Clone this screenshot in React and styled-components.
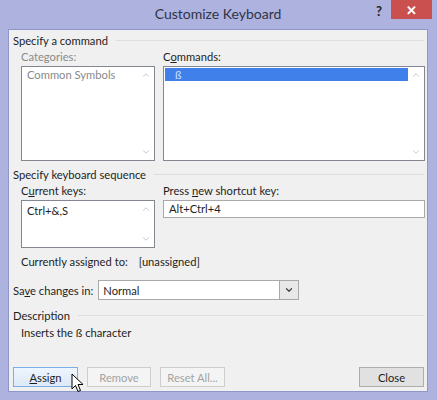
import React from 'react';
import styled, { createGlobalStyle } from 'styled-components';
import { ChevronUp, ChevronDown } from 'lucide-react';

const GlobalStyle = createGlobalStyle`
  html, body {
    margin: 0;
    padding: 0;
    background: #ffffff;
  }
  body {
    font-family: Lato, "Noto Sans", sans-serif;
    font-size: 11.2px;
    color: #1e1e1e;
  }
`;

const Window = styled.div`
  position: relative;
  width: 437px;
  height: 400px;
  box-sizing: border-box;
  background: #adb2df;
  display: flex;
  flex-direction: column;
  padding: 0 9px 8px 8px;
`;

const TitleBar = styled.div`
  height: 29px;
  flex: none;
  display: flex;
  align-items: center;
  justify-content: center;
  position: relative;
`;

const Title = styled.div`
  font-size: 14px;
  color: #2f3447;
  margin-top: -3px;
`;

const Help = styled.div`
  position: absolute;
  right: 46px;
  top: 3px;
  font-size: 13px;
  font-weight: bold;
  color: #222;
`;

const CloseX = styled.div`
  position: absolute;
  right: -4px;
  top: 0;
  width: 41px;
  height: 19px;
  background: #c9504f;
  color: #fff;
  font-size: 13px;
  font-weight: bold;
  display: flex;
  align-items: center;
  justify-content: center;
`;

const Body = styled.div`
  flex: 1;
  background: #f0f0f0;
  border: 1px solid #8f96c8;
  padding: 3px 3px 0 4px;
  display: flex;
  flex-direction: column;
`;

const SectionHead = styled.div`
  display: flex;
  align-items: center;
  gap: 8px;
  height: 14px;
  margin-top: ${p => p.$top || 0}px;
  &::after {
    content: '';
    flex: 1;
    border-top: 1px solid #dedede;
  }
`;

const Indent = styled.div`
  padding-left: 8px;
`;

const TwoCols = styled.div`
  display: grid;
  grid-template-columns: 134px 262px;
  column-gap: 8px;
  margin-top: ${p => p.$top || 0}px;
`;

const Label = styled.div`
  height: 14px;
  line-height: 14px;
  margin-bottom: 2px;
  color: ${p => (p.$dim ? '#8a8a8a' : '#1e1e1e')};
  u { text-decoration: underline; }
`;

const ListBox = styled.div`
  position: relative;
  height: ${p => p.$h}px;
  box-sizing: border-box;
  background: #fff;
  border: 1px solid #828790;
  padding: 1px;
`;

const ListItem = styled.div`
  height: 13px;
  line-height: 13px;
  padding-left: ${p => (p.$selected ? 10 : 4)}px;
  margin-right: 15px;
  color: ${p => (p.$selected ? '#cfe3ff' : '#8a8a8a')};
  background: ${p => (p.$selected ? '#3f80ea' : 'transparent')};
`;

const Scroll = styled.div`
  position: absolute;
  right: 2px;
  top: 3px;
  bottom: 3px;
  width: 13px;
  display: flex;
  flex-direction: column;
  justify-content: space-between;
  align-items: center;
  color: #bdbdbd;
`;

const KeyText = styled.div`
  padding: 2px 0 0 4px;
  height: 13px;
  line-height: 13px;
`;

const TextInput = styled.div`
  height: 18px;
  box-sizing: border-box;
  background: #fff;
  border: 1px solid #a9a9a9;
  padding-left: 5px;
  line-height: 16px;
`;

const AssignedRow = styled.div`
  display: flex;
  gap: 11px;
  margin-top: 7px;
  height: 14px;
  line-height: 14px;
`;

const SaveRow = styled.div`
  display: flex;
  align-items: center;
  gap: 5px;
  margin-top: 11px;
`;

const Select = styled.div`
  width: 201px;
  height: 20px;
  box-sizing: border-box;
  border: 1px solid #a9a9a9;
  background: #fff;
  display: flex;
  align-items: center;
  padding-left: 4px;
`;

const SelectValue = styled.div`
  flex: 1;
`;

const SelectButton = styled.div`
  width: 18px;
  height: 18px;
  border-left: 1px solid #a9a9a9;
  background: #e8e8e8;
  display: flex;
  align-items: center;
  justify-content: center;
  color: #444;
`;

const DescText = styled.div`
  padding-left: 8px;
  margin-top: 4px;
  height: 14px;
  line-height: 14px;
`;

const ButtonRow = styled.div`
  display: flex;
  gap: 9px;
  margin-top: 27px;
`;

const Button = styled.div`
  width: ${p => p.$w || 65}px;
  height: 20px;
  box-sizing: border-box;
  display: flex;
  align-items: center;
  justify-content: center;
  border: 1px solid ${p => (p.$focus ? '#7aaee4' : p.$off ? '#cdcdcd' : '#adadad')};
  background: ${p => (p.$focus ? 'linear-gradient(#eef5fd, #dde9f7)' : p.$off ? '#f4f4f4' : '#e1e1e1')};
  color: ${p => (p.$off ? '#a3a3a3' : '#1e1e1e')};
  margin-left: ${p => (p.$push ? 'auto' : '0')};
`;

const Cursor = styled.svg`
  position: absolute;
  left: 71px;
  top: 373px;
`;

const Chevrons = () => (
  <Scroll>
    <ChevronUp size={10} strokeWidth={2} />
    <ChevronDown size={10} strokeWidth={2} />
  </Scroll>
);

const App = () => (
  <>
    <GlobalStyle />
    <Window>
      <TitleBar>
        <Title>Customize Keyboard</Title>
        <Help>?</Help>
        <CloseX>✕</CloseX>
      </TitleBar>
      <Body>
        <SectionHead>Specify a command</SectionHead>
        <Indent>
          <TwoCols $top={3}>
            <div>
              <Label $dim>Categories:</Label>
              <ListBox $h={95}>
                <ListItem>Common Symbols</ListItem>
                <Chevrons />
              </ListBox>
            </div>
            <div>
              <Label>C<u>o</u>mmands:</Label>
              <ListBox $h={95}>
                <ListItem $selected>ß</ListItem>
                <Chevrons />
              </ListBox>
            </div>
          </TwoCols>
        </Indent>
        <SectionHead $top={6}>Specify keyboard sequence</SectionHead>
        <Indent>
          <TwoCols $top={3}>
            <div>
              <Label>C<u>u</u>rrent keys:</Label>
              <ListBox $h={48}>
                <KeyText>Ctrl+&amp;,S</KeyText>
                <Chevrons />
              </ListBox>
            </div>
            <div>
              <Label>Press <u>n</u>ew shortcut key:</Label>
              <TextInput>Alt+Ctrl+4</TextInput>
            </div>
          </TwoCols>
          <AssignedRow>
            <span>Currently assigned to:</span>
            <span>[unassigned]</span>
          </AssignedRow>
        </Indent>
        <SaveRow>
          <span>Sa<u>v</u>e changes in:</span>
          <Select>
            <SelectValue>Normal</SelectValue>
            <SelectButton>
              <ChevronDown size={10} strokeWidth={3} />
            </SelectButton>
          </Select>
        </SaveRow>
        <SectionHead $top={8}>Description</SectionHead>
        <DescText>Inserts the ß character</DescText>
        <ButtonRow>
          <Button $focus><span><u>A</u>ssign</span></Button>
          <Button $off $w={64}>Remove</Button>
          <Button $off>Reset All...</Button>
          <Button $push>Close</Button>
        </ButtonRow>
      </Body>
      <Cursor width="13" height="20" viewBox="0 0 13 20">
        <path d="M1 1 L1 16 L4.5 12.5 L7 18.5 L9.5 17.5 L7 11.5 L12 11.5 Z" fill="#fff" stroke="#000" strokeWidth="1" strokeLinejoin="round" />
      </Cursor>
    </Window>
  </>
);

export default App;
